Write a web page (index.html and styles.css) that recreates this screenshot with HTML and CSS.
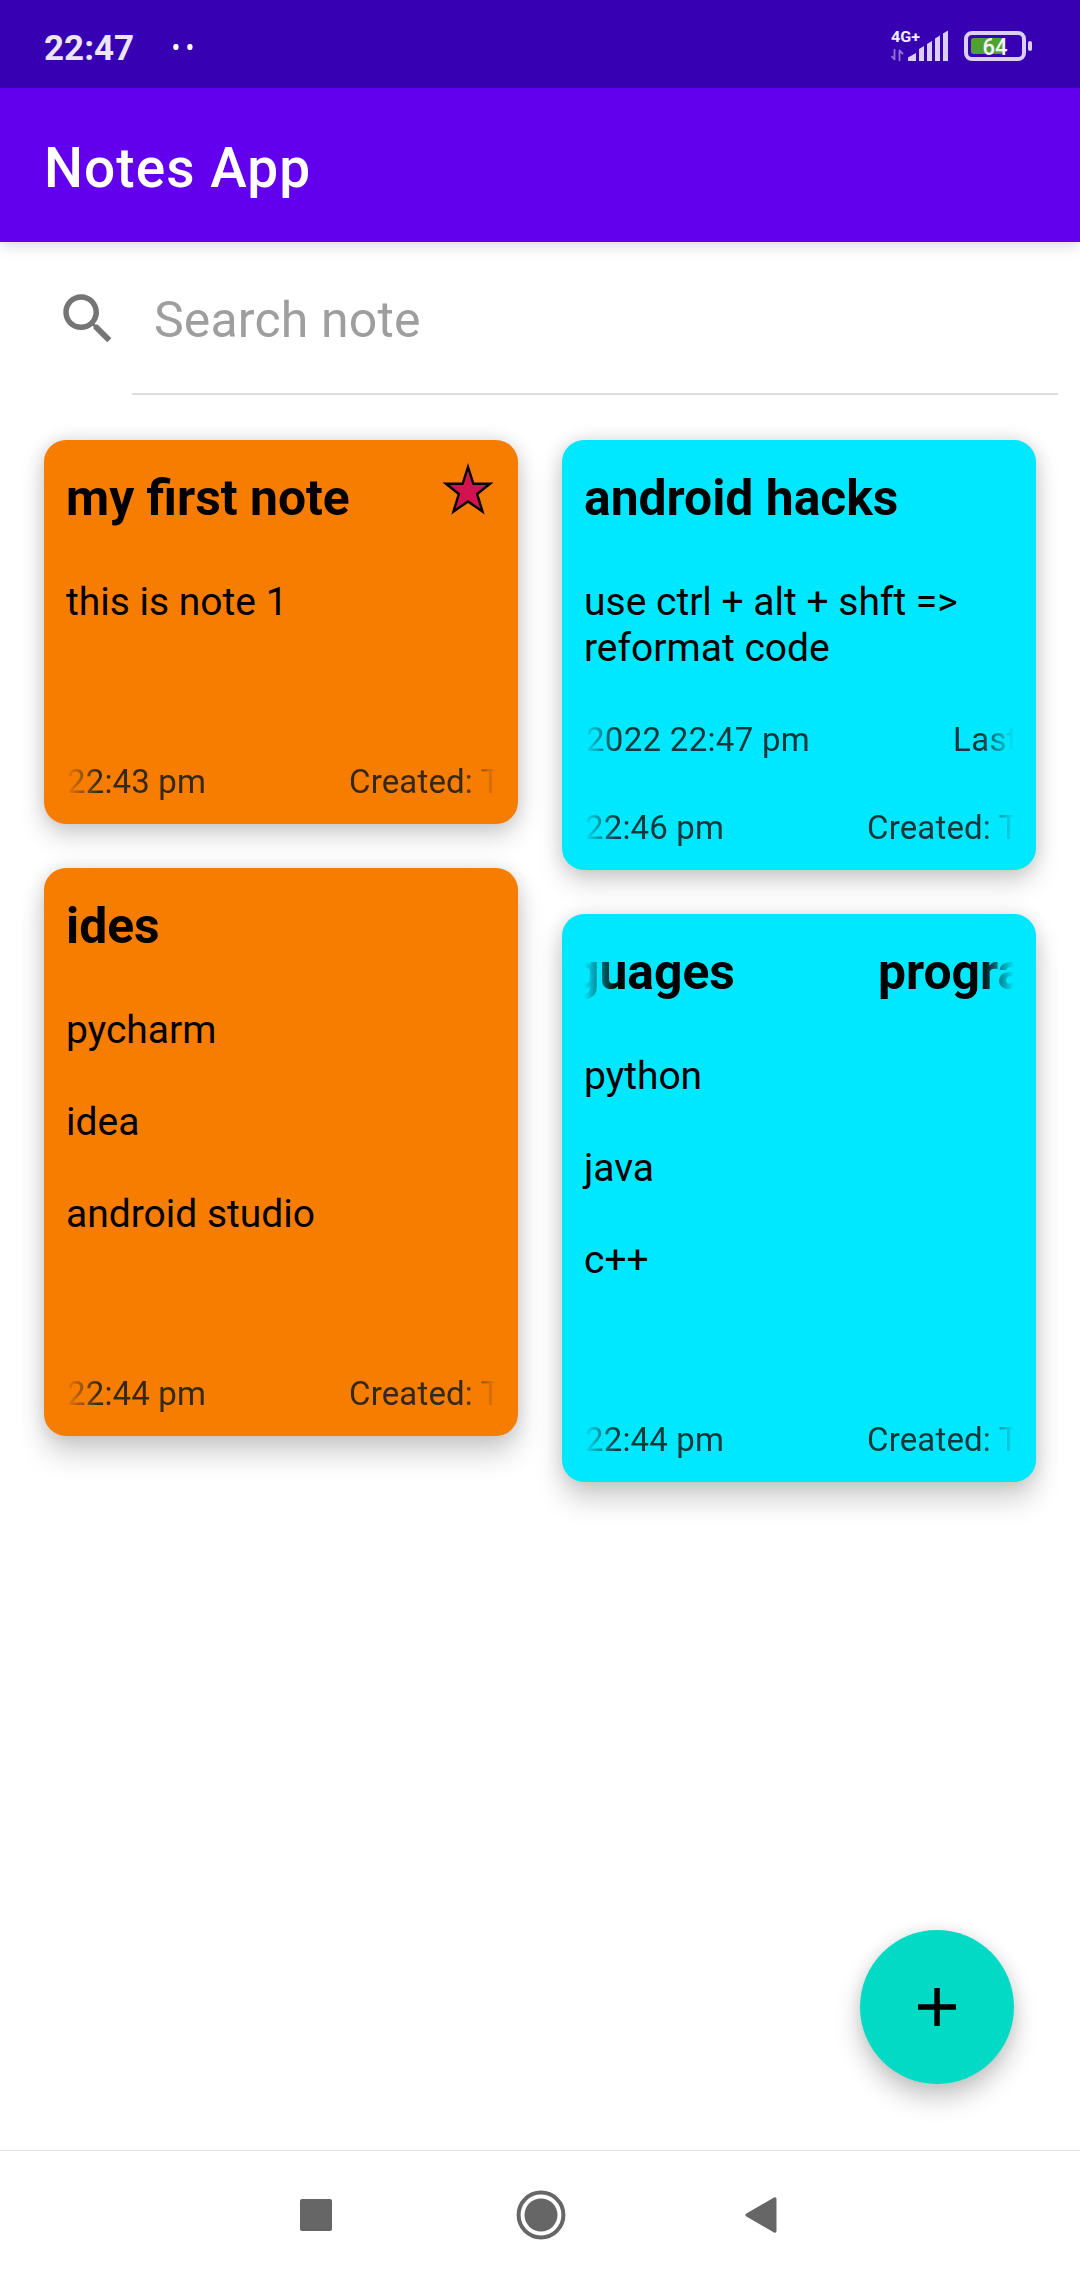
FILE: index.html
```html
<!DOCTYPE html>
<html lang="en">
<head>
<meta charset="utf-8">
<title>Notes App</title>
<link rel="stylesheet" href="styles.css">
</head>
<body>
<div class="screen">
  <div class="status-bar">
    <span class="clock">22:47</span>
    <svg class="dots" width="20" height="6" viewBox="0 0 20 6" fill="#fff"><rect x="0.3" width="5.2" height="6" rx="2.2"/><rect x="14.3" width="5.2" height="6" rx="2.2"/></svg>
    <div class="indicators">
      <svg width="58" height="34" viewBox="0 0 58 34" fill="#dccff5">
        <text class="network" x="0" y="12" textLength="29" lengthAdjust="spacingAndGlyphs">4G+</text>
        <path d="M17 31v-3.500l8-4.500v8zM28 31V19l5-3v15zM36 31V14l5-3v20zM44 31V8.500l5-3v25.500zM52 31V3.500l5-3v30.500z"/>
        <path d="M3.500 19v11M4 30L0.500 26M8.500 31V20M8 20l4 4" fill="none" stroke="#9274d4" stroke-width="1.800"/>
      </svg>
      <svg width="70" height="34" viewBox="0 0 70 34">
        <rect x="2" y="3" width="58" height="26" rx="6" fill="none" stroke="#dccff5" stroke-width="4"/>
        <rect x="7" y="8" width="32" height="16" rx="2.500" fill="#50a22f"/>
        <rect x="64" y="11" width="4" height="10" rx="2" fill="#dccff5"/>
        <text class="percent" x="18.500" y="25" textLength="25" lengthAdjust="spacingAndGlyphs">64</text>
      </svg>
    </div>
  </div>

  <header class="app-bar"><h1>Notes App</h1></header>

  <main class="content">
    <div class="search">
      <svg class="search-icon" width="66" height="66" viewBox="0 0 24 24" fill="#757575"><path d="M15.500 14h-.79l-.28-.27C15.410 12.590 16 11.110 16 9.500 16 5.910 13.090 3 9.500 3S3 5.910 3 9.500 5.910 16 9.500 16c1.610 0 3.090-.59 4.230-1.570l.27.28v.79l5 4.990L20.490 19l-4.990-5zm-6 0C7.010 14 5 11.990 5 9.500S7.010 5 9.500 5 14 7.010 14 9.500 11.990 14 9.500 14z"/></svg>
      <div class="search-field">Search note</div>
    </div>

    <div class="notes">
      <div class="column">
        <article class="note orange">
          <div class="note-head">
            <h2>my first note</h2>
            <svg class="star" width="56" height="56" viewBox="0 0 52 52"><path d="M26 4.500L31 20.200H46.500L34.500 29.700L39.500 46L26 36.700L12.500 46L17.500 29.700L5.500 20.200H21Z" fill="#d31350" stroke="#000" stroke-width="2.200" stroke-miterlimit="10"/></svg>
          </div>
          <p class="note-body">this is note 1</p>
          <div class="marquee date"><span>22:43 pm</span><span>Created: T</span></div>
        </article>
        <article class="note orange">
          <div class="note-head"><h2>ides</h2></div>
          <p class="note-body">pycharm<br><br>idea<br><br>android studio</p>
          <div class="marquee date"><span>22:44 pm</span><span>Created: T</span></div>
        </article>
      </div>
      <div class="column">
        <article class="note cyan">
          <div class="note-head"><h2>android hacks</h2></div>
          <p class="note-body edited">use ctrl + alt + shft =&gt; reformat code</p>
          <div class="marquee date updated"><span>2022 22:47 pm</span><span>Last</span></div>
          <div class="marquee date"><span>22:46 pm</span><span>Created: T</span></div>
        </article>
        <article class="note cyan">
          <div class="note-head"><h2 class="marquee scrolled"><span>guages</span><span>progra</span></h2></div>
          <p class="note-body">python<br><br>java<br><br>c++</p>
          <div class="marquee date"><span>22:44 pm</span><span>Created: T</span></div>
        </article>
      </div>
    </div>
    <div class="fab"><svg width="38" height="38" viewBox="0 0 38 38"><path d="M16.300 0h5.500v16.300H38v5.500H21.800V38h-5.500V21.800H0v-5.500h16.300z"/></svg></div>
  </main>

  <nav class="nav-bar">
    <svg width="32" height="32" viewBox="0 0 32 32" fill="#666"><rect width="32" height="32" rx="2"/></svg>
    <svg width="50" height="50" viewBox="0 0 50 50"><circle cx="25" cy="25" r="22.400" fill="none" stroke="#666" stroke-width="4"/><circle cx="25" cy="25" r="16.500" fill="#666"/></svg>
    <svg width="32" height="36" viewBox="0 0 32 36" fill="#666"><path d="M1 16.800L29 .4Q31.500-.4 31.500 2V34Q31.500 36.400 29 35.600L1 19.200Q-.3 18 1 16.800Z"/></svg>
  </nav>
</div>
</body>
</html>
```
FILE: styles.css
```css
* { box-sizing: border-box; }
body {
  margin: 0;
  background: #fff;
  color: #000;
  font-family: Roboto, "Noto Sans", sans-serif;
}
h1, h2, p { margin: 0; }
svg { display: block; flex: none; }

.screen { width: 1080px; height: 2280px; display: flex; flex-direction: column; overflow: hidden; }

.status-bar { height: 88px; flex: none; background: #3700b3; display: flex; align-items: center; padding: 6px 46px 0 44px; }
.clock { width: 129px; padding-top: 3px; color: #ebe5f7; font-size: 35px; font-weight: 700; line-height: 40px; }
.indicators { margin-left: auto; display: flex; gap: 15px; }
.network { font-size: 15.5px; font-weight: 700; fill: #f3eefb; }
.percent { font-size: 23px; font-weight: 500; fill: #f5f1fb; }

.app-bar { position: relative; z-index: 1; height: 154px; flex: none; background: #6200ee; padding-left: 44px; display: flex; align-items: center; box-shadow: 0 4px 14px rgba(0, 0, 0, .15); }
.app-bar h1 { color: #fff; font-size: 55px; font-weight: 500; line-height: 64px; letter-spacing: 1.05px; padding-top: 5px; }

.content { position: relative; flex: 1; }

.search { display: flex; padding: 0 22px 0 55px; height: 153px; }
.search-icon { margin-top: 44px; }
.search-field { flex: 1; margin-left: 11px; padding: 49px 22px 0; border-bottom: 2px solid #dcdcdc; color: #9e9e9e; font-size: 50px; line-height: 58px; letter-spacing: 0.15px; }

.notes { margin: 0 22px; padding: 45px 22px 80px; display: flex; gap: 44px; align-items: flex-start; overflow: hidden; }
.column { flex: 1; min-width: 0; display: flex; flex-direction: column; gap: 44px; }
.note { padding: 29px 22px 23px; border-radius: 22px; display: flex; flex-direction: column; box-shadow: 0 12px 26px rgba(0, 0, 0, .17), 0 0 18px rgba(0, 0, 0, .12); }
.note + .note { box-shadow: 0 18px 28px rgba(0, 0, 0, .18), 0 0 18px rgba(0, 0, 0, .12); }
.orange { background: #f77d00; }
.cyan { background: #00e8ff; }
.note-head { height: 58px; display: flex; justify-content: space-between; }
.note-head h2 { font-size: 49.8px; font-weight: 700; line-height: 58px; white-space: nowrap; }
.star { margin: -7px 0 0; }
.note-body { margin: 52px 0 137px; font-size: 39px; line-height: 46px; }
.note-body.edited { margin-bottom: 49px; }
.marquee { width: 430px; display: flex; gap: 143px; overflow: hidden; white-space: nowrap; -webkit-mask-image: linear-gradient(90deg, transparent, #000 33px, #000 397px, transparent); mask-image: linear-gradient(90deg, transparent, #000 33px, #000 397px, transparent); }
.date { height: 39px; flex: none; color: rgba(22, 28, 30, .87); font-size: 33px; line-height: 39px; letter-spacing: 0.15px; padding-left: 1px; }
.updated { margin-bottom: 49px; padding-left: 2px; letter-spacing: 0.3px; }
.marquee span { flex: none; }
.scrolled span:first-child { margin-left: -13px; }

.fab { position: absolute; right: 66px; bottom: 66px; width: 154px; height: 154px; border-radius: 50%; background: #03dac5; display: grid; place-items: center; box-shadow: 0 14px 26px rgba(0, 0, 0, .22), 0 0 16px rgba(0, 0, 0, .08); }

.nav-bar { height: 130px; flex: none; border-top: 1px solid #e3e3e3; display: grid; grid-template-columns: 300px 216px 229px 1fr; align-items: center; padding-bottom: 1px; }
.nav-bar svg:first-child { grid-column: 2; }
```
